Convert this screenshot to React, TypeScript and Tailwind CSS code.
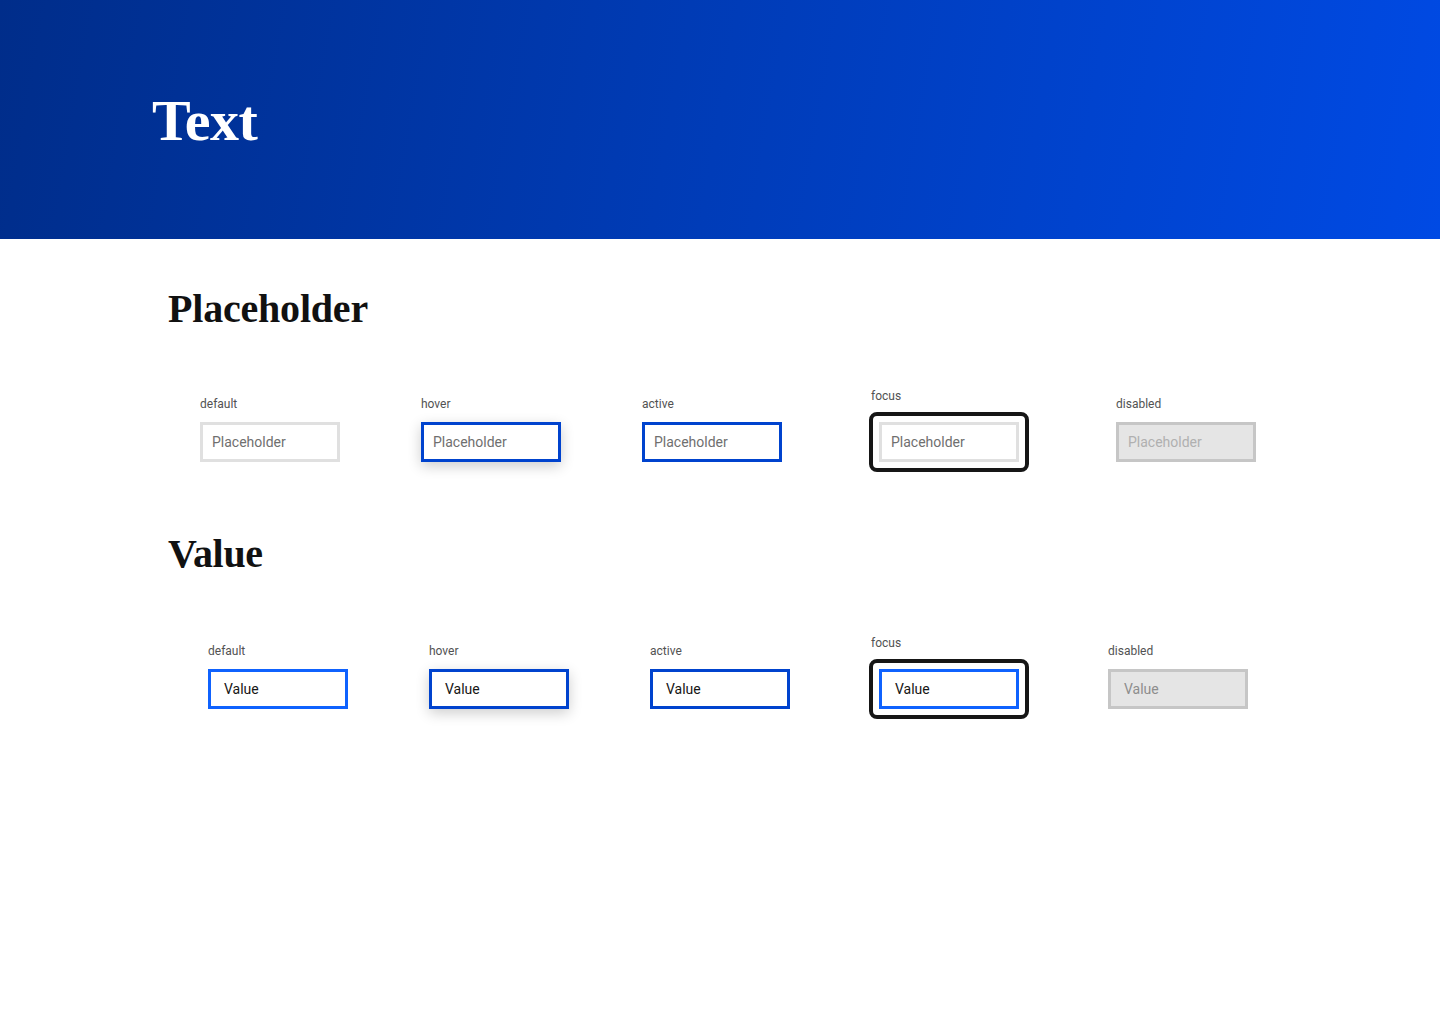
import React from "react";

const serif = { fontFamily: '"Liberation Serif", "Times New Roman", serif' };
const sans = { fontFamily: 'Roboto, "Liberation Sans", Arial, sans-serif' };

type Kind = "default" | "hover" | "active" | "focus" | "disabled";

function Field({ kind, value, text }: { kind: Kind; value: boolean; text: string }) {
  let box = "";
  let txt = value ? "text-[#161616]" : "text-[#6f6f6f]";
  if (kind === "default") box = value ? "border-[#0f62fe] bg-white" : "border-[#e0e0e0] bg-white";
  if (kind === "hover") box = "border-[#0043ce] bg-white shadow-[0_4px_14px_rgba(0,0,0,0.2)]";
  if (kind === "active") box = "border-[#0043ce] bg-white";
  if (kind === "focus") box = value ? "border-[#0f62fe] bg-white" : "border-[#e0e0e0] bg-white";
  if (kind === "disabled") {
    box = "border-[#c6c6c6] bg-[#e5e5e5]";
    txt = value ? "text-[#8d8d8d]" : "text-[#b0b0b0]";
  }
  const inner = (
    <div
      className={`w-[140px] h-[40px] border-[3px] flex items-center text-[14px] ${value ? "pl-[13px]" : "pl-[9px]"} ${box} ${txt}`}
      style={sans}
    >
      {text}
    </div>
  );
  if (kind === "focus") {
    return (
      <div className="border-[4px] border-[#161616] rounded-[8px] p-[6px] w-[160px]">{inner}</div>
    );
  }
  return inner;
}

function Item({ kind, value, text }: { kind: Kind; value: boolean; text: string }) {
  const isFocus = kind === "focus";
  return (
    <div className={`flex flex-col ${isFocus ? "" : "pt-[8px]"}`}>
      <div
        className={`text-[12px] leading-[16px] text-[#525252] ${isFocus ? "mb-[8px] pl-[2px]" : "mb-[10px]"}`}
        style={sans}
      >
        {kind}
      </div>
      <Field kind={kind} value={value} text={text} />
    </div>
  );
}

function Row({ value, text, gaps, left }: { value: boolean; text: string; gaps: string[]; left: string }) {
  const kinds: Kind[] = ["default", "hover", "active", "focus", "disabled"];
  return (
    <div className={`flex items-start ${left}`}>
      {kinds.map((k, i) => (
        <div key={k} className={i > 0 ? gaps[i - 1] : ""}>
          <Item kind={k} value={value} text={text} />
        </div>
      ))}
    </div>
  );
}

export default function App() {
  return (
    <div className="w-[1440px] min-h-[1024px] bg-white">
      <div className="h-[239px] bg-[linear-gradient(100deg,#002d8a_0%,#003cb8_50%,#004ae4_100%)] pl-[152px] pt-[86px]">
        <h1 className="text-white text-[58px] leading-[70px] font-bold tracking-[-0.5px]" style={serif}>
          Text
        </h1>
      </div>
      <div className="pl-[168px]">
        <h2 className="pt-[44px] text-[40px] leading-[52px] font-bold text-[#111] tracking-[-0.2px]" style={serif}>
          Placeholder
        </h2>
        <div className="pt-[53px] -ml-[168px]">
          <Row
            value={false}
            text="Placeholder"
            left="pl-[200px]"
            gaps={["ml-[81px]", "ml-[81px]", "ml-[87px]", "ml-[87px]"]}
          />
        </div>
        <h2 className="pt-[56px] text-[40px] leading-[52px] font-bold text-[#111] tracking-[-0.3px]" style={serif}>
          Value
        </h2>
        <div className="pt-[55px] -ml-[168px]">
          <Row
            value={true}
            text="Value"
            left="pl-[208px]"
            gaps={["ml-[81px]", "ml-[81px]", "ml-[79px]", "ml-[79px]"]}
          />
        </div>
      </div>
    </div>
  );
}
